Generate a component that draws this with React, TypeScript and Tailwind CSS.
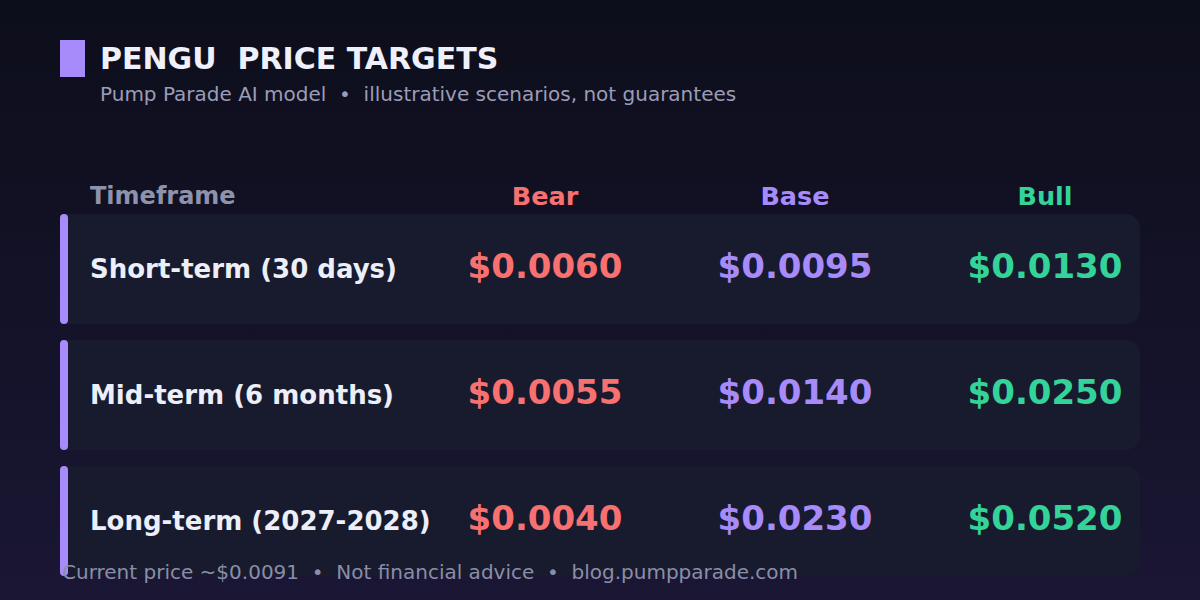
import React from "react";

const rows = [
  { label: "Short-term (30 days)", bear: "$0.0060", base: "$0.0095", bull: "$0.0130" },
  { label: "Mid-term (6 months)", bear: "$0.0055", base: "$0.0140", bull: "$0.0250" },
  { label: "Long-term (2027-2028)", bear: "$0.0040", base: "$0.0230", bull: "$0.0520" },
];

export default function App() {
  return (
    <div
      className="relative w-[1200px] h-[600px] overflow-hidden bg-gradient-to-b from-[#0d0e1b] to-[#1a1634] px-[60px] pt-[40px]"
      style={{ fontFamily: '"DejaVu Sans", sans-serif' }}
    >
      <div className="flex items-start gap-[15px]">
        <div className="w-[25px] h-[37px] shrink-0 bg-[#a78bfa]" />
        <div className="text-[30px] leading-[37px] font-bold text-[#eef0fb] whitespace-pre">PENGU  PRICE TARGETS</div>
      </div>
      <div className="mt-[5px] pl-[40px] text-[20px] leading-[24px] text-[#9a9db8] whitespace-pre">
        Pump Parade AI model  •  illustrative scenarios, not guarantees
      </div>

      <div className="mt-[78px] flex font-bold leading-[24px]">
        <div className="w-[8px] shrink-0" />
        <div className="grid shrink-0 grid-cols-[352px_250px_250px_250px] items-end">
          <div className="pl-[22px] text-[24px] text-[#8e92ab]">Timeframe</div>
          <div className="text-center text-[25.5px] text-[#f87171]">Bear</div>
          <div className="text-center text-[25.5px] text-[#a78bfa]">Base</div>
          <div className="text-center text-[25.5px] text-[#34d399]">Bull</div>
        </div>
      </div>

      <div className="mt-[6px] flex flex-col gap-[16px]">
        {rows.map((r) => (
          <div key={r.label} className="flex h-[110px] w-[1080px] rounded-r-[14px] rounded-l-[4px] bg-[#181a2e]">
            <div className="w-[8px] shrink-0 rounded-[4px] bg-[#a78bfa]" />
            <div className="grid shrink-0 grid-cols-[352px_250px_250px_250px] items-center font-bold">
              <div className="pl-[22px] text-[26px] text-[#eceef8] whitespace-nowrap">{r.label}</div>
              <div className="pb-[6px] text-center text-[34px] text-[#f87171]">{r.bear}</div>
              <div className="pb-[6px] text-center text-[34px] text-[#a78bfa]">{r.base}</div>
              <div className="pb-[6px] text-center text-[34px] text-[#34d399]">{r.bull}</div>
            </div>
          </div>
        ))}
      </div>

      <div className="absolute left-[62px] top-[560px] text-[20px] leading-[24px] text-[#8a8ea8] whitespace-pre">
        Current price ~$0.0091  •  Not financial advice  •  blog.pumpparade.com
      </div>
    </div>
  );
}
